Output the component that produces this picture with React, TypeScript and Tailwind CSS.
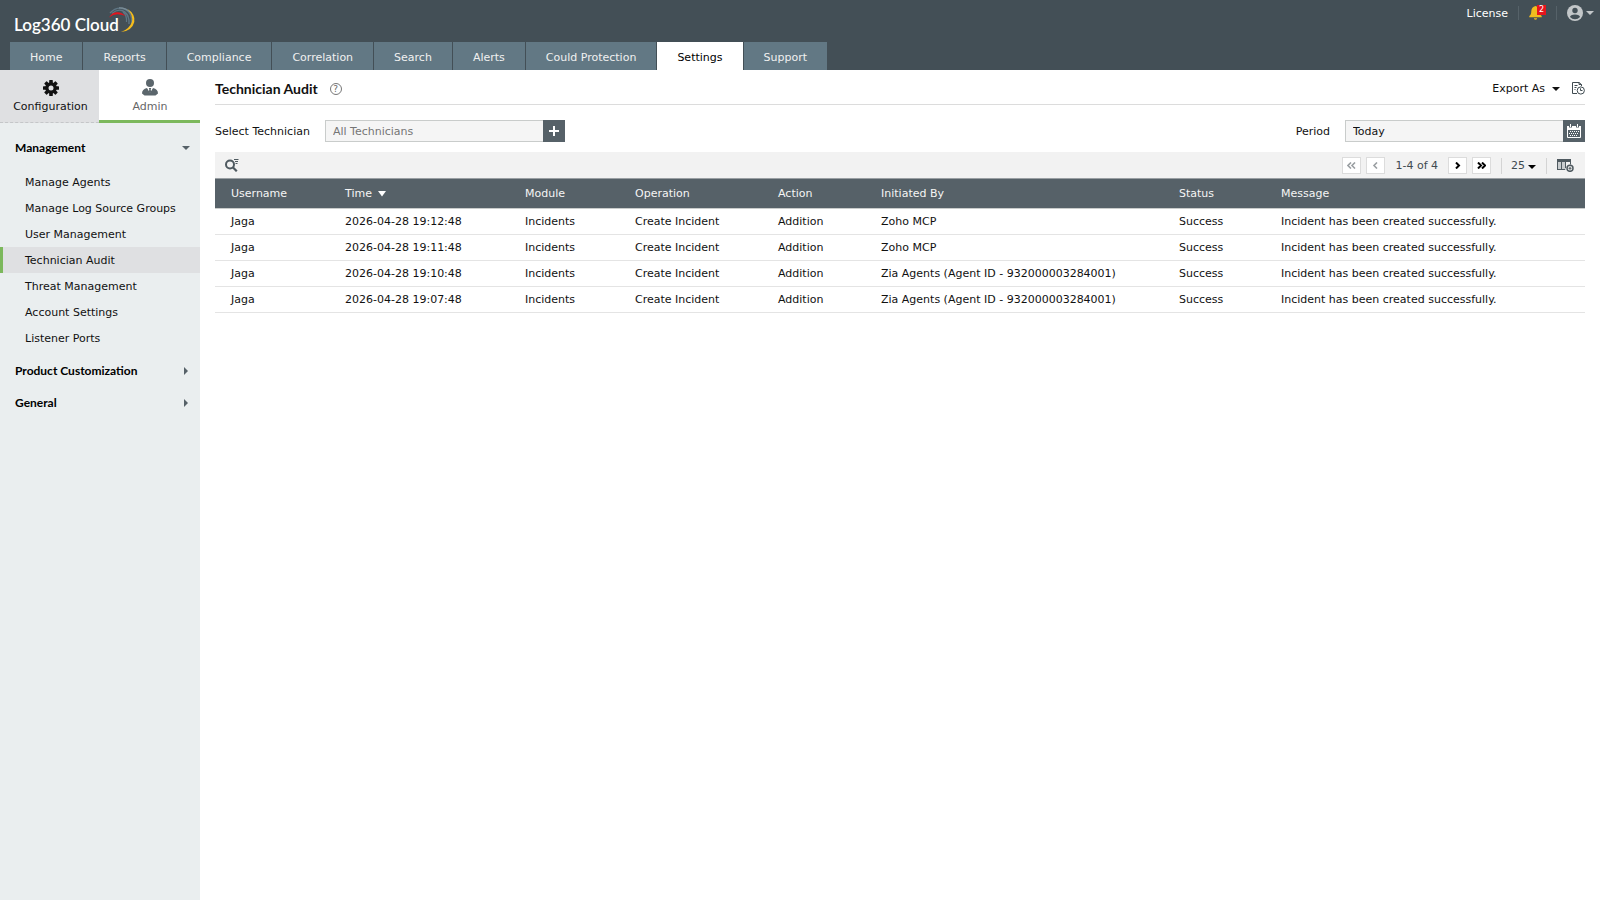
import { useState } from "react";

const TABS = [
  "Home",
  "Reports",
  "Compliance",
  "Correlation",
  "Search",
  "Alerts",
  "Could Protection",
  "Settings",
  "Support",
];

const MANAGEMENT = [
  "Manage Agents",
  "Manage Log Source Groups",
  "User Management",
  "Technician Audit",
  "Threat Management",
  "Account Settings",
  "Listener Ports",
];

interface AuditRow {
  username: string;
  time: string;
  module: string;
  operation: string;
  action: string;
  initiatedBy: string;
  status: string;
  message: string;
}

const base = {
  username: "Jaga",
  module: "Incidents",
  operation: "Create Incident",
  action: "Addition",
  status: "Success",
  message: "Incident has been created successfully.",
};

const ROWS: AuditRow[] = [
  { ...base, time: "2026-04-28 19:12:48", initiatedBy: "Zoho MCP" },
  { ...base, time: "2026-04-28 19:11:48", initiatedBy: "Zoho MCP" },
  { ...base, time: "2026-04-28 19:10:48", initiatedBy: "Zia Agents (Agent ID - 932000003284001)" },
  { ...base, time: "2026-04-28 19:07:48", initiatedBy: "Zia Agents (Agent ID - 932000003284001)" },
];

const COLUMNS: { key: keyof AuditRow; label: string; width: string }[] = [
  { key: "username", label: "Username", width: "w-[114px]" },
  { key: "time", label: "Time", width: "w-[180px]" },
  { key: "module", label: "Module", width: "w-[110px]" },
  { key: "operation", label: "Operation", width: "w-[143px]" },
  { key: "action", label: "Action", width: "w-[103px]" },
  { key: "initiatedBy", label: "Initiated By", width: "w-[298px]" },
  { key: "status", label: "Status", width: "w-[102px]" },
  { key: "message", label: "Message", width: "" },
];

function CaretDown({ className }: { className?: string }) {
  return (
    <svg viewBox="0 0 8 4" className={`h-1 w-2 ${className ?? ""}`} fill="currentColor" aria-hidden="true">
      <path d="M0 0h8L4 4z" />
    </svg>
  );
}

function CaretRight({ className }: { className?: string }) {
  return (
    <svg viewBox="0 0 4 8" className={`h-2 w-1 ${className ?? ""}`} fill="currentColor" aria-hidden="true">
      <path d="M0 0v8l4-4z" />
    </svg>
  );
}

function LogoArcs() {
  return (
    <svg viewBox="0 0 28 26" width="28" height="26" fill="none" aria-hidden="true">
      <path d="M2 6Q7 .3 14 1.200Q22 3 23.500 11V17" stroke="#5f7684" strokeWidth="1.400" />
      <path d="M4 6.500Q9 2 14 3.500Q20 6 21 13V17" stroke="#5f7684" strokeWidth="1.400" />
      <path d="M11 .8Q18 .6 23 6" stroke="#7b8d97" strokeWidth="1.200" />
      <path d="M15 5Q19 8 18.500 15" stroke="#5f7684" strokeWidth="1.200" />
      <path d="M1 10.500Q4 5.300 9.500 5.300Q14 5.500 17.500 9Q13.500 7.200 9.500 7.200Q5 7.200 1 10.500z" fill="#e5141d" />
      <path d="M19.500 2Q27.500 7 26.300 15Q24 24 13 25Q21.500 22 23.900 15Q25.300 8 19.500 2z" fill="#f5bc1c" />
    </svg>
  );
}

function GearIcon() {
  return (
    <svg viewBox="0 0 16 16" width="16" height="16" aria-hidden="true">
      <g fill="#111">
        <rect x="6.200" y="0" width="3.600" height="16" rx=".6" />
        <rect x="6.200" y="0" width="3.600" height="16" rx=".6" transform="rotate(45 8 8)" />
        <rect x="6.200" y="0" width="3.600" height="16" rx=".6" transform="rotate(90 8 8)" />
        <rect x="6.200" y="0" width="3.600" height="16" rx=".6" transform="rotate(135 8 8)" />
        <circle cx="8" cy="8" r="5.800" />
      </g>
      <circle cx="8" cy="8" r="2.500" fill="#dfe0e2" />
    </svg>
  );
}

function AdminIcon() {
  return (
    <svg viewBox="0 0 16 17" width="16" height="17" fill="#5b666c" aria-hidden="true">
      <circle cx="8" cy="4" r="4" />
      <path d="M0 14.500Q0 10 5 9l3 5 3-5q5 1 5 5.500l-2.500 2h-11z" />
      <path d="M6.800 9h2.400l-.5 1.500L9.200 13 8 14.500 6.800 13l.5-2.500z" />
    </svg>
  );
}

function BellIcon() {
  return (
    <svg viewBox="0 0 13 14" width="13" height="14" fill="#f0bd1e" aria-hidden="true">
      <path d="M6.500 0Q2.500 1 2.300 5 2.300 9 .3 10v1.300h12.400V10Q10.700 9 10.700 5 10.500 1 6.500 0z" />
      <path d="M5 12.300h3v.7q-1.500 1.500-3 0z" />
    </svg>
  );
}

function UserIcon() {
  return (
    <svg viewBox="0 0 16 16" width="16" height="16" aria-hidden="true">
      <circle cx="8" cy="8" r="8" fill="#c3c7c9" />
      <circle cx="8" cy="5.500" r="2.700" fill="#434f56" />
      <path d="M3 12Q3.300 9.400 8 9.400T13 12Q11 14.300 8 14.300T3 12z" fill="#434f56" />
    </svg>
  );
}

function ReportClockIcon() {
  return (
    <svg viewBox="0 0 13 13" width="13" height="13" fill="none" stroke="#3f4a50" aria-hidden="true">
      <path d="M5 11.500H.5V.5H7L9.500 2.500V4M7 .5v2h2.500" />
      <path d="M2.500 3.500h3M2.500 5.500h2M2.500 7.500h1" />
      <circle cx="8.800" cy="8.500" r="3.600" />
      <path d="M8.500 6.300v2.200h2" />
    </svg>
  );
}

function SearchIcon() {
  return (
    <svg viewBox="0 0 14 13" width="14" height="13" fill="none" stroke="#4f5a60" aria-hidden="true">
      <circle cx="5" cy="5.500" r="4" strokeWidth="2" />
      <path d="M7.800 8.300l4 4" strokeWidth="2.200" />
      <path d="M9 .5h4.500M10 2.500h3M10.500 4.500h2" strokeWidth="1" />
    </svg>
  );
}

function CalendarIcon() {
  return (
    <svg viewBox="0 0 14 14" width="14" height="14" aria-hidden="true">
      <path d="M.5 2.500h13v11H.5z" fill="none" stroke="#fff" />
      <path d="M0 2h14v4H0z" fill="#fff" />
      <path d="M2 0h3v3.500H2zM9 0h3v3.500H9z" fill="#566168" />
      <path d="M3 0h1v3H3zM10 0h1v3h-1z" fill="#fff" />
      <path d="M3 7.500h9M2 9.500h9M3 11.500h7" stroke="#fff" strokeDasharray="1 1" />
    </svg>
  );
}

function ColumnsIcon() {
  return (
    <svg viewBox="0 0 17 13" width="17" height="13" fill="none" stroke="#4f5a60" aria-hidden="true">
      <path d="M1 2h3v9H1zM5 2h4v9H5z" fill="#c9cdcf" stroke="none" />
      <path d="M0 1.500h14" strokeWidth="3" />
      <path d="M.5 2v9M4.500 2v9M8.500 2v7M13.500 2v3.500M0 10.500h8" />
      <circle cx="13" cy="9.300" r="3" strokeWidth="1.500" />
      <path d="M11.500 9.300h3M13 7.800v3" />
    </svg>
  );
}

function PagerButton({ label, double, back, disabled }: { label: string; double?: boolean; back?: boolean; disabled?: boolean }) {
  return (
    <button
      aria-label={label}
      disabled={disabled}
      className="flex h-[17px] w-[19px] items-center justify-center border border-[#dcdcdc] bg-white text-black disabled:text-[#9a9fa2]"
    >
      <svg
        viewBox="0 0 9 7"
        width="9"
        height="7"
        fill="none"
        stroke="currentColor"
        strokeWidth={disabled ? "1.600" : "2"}
        className={back ? "rotate-180" : ""}
        aria-hidden="true"
      >
        {double ? <path d="M1 .5l3 3-3 3M5 .5l3 3-3 3" /> : <path d="M3 .5l3 3-3 3" />}
      </svg>
    </button>
  );
}

function Header({ tab, onTab }: { tab: string; onTab: (t: string) => void }) {
  return (
    <header className="flex h-[70px] flex-col justify-between bg-[#434f56]">
      <div className="flex items-start justify-between pl-[14px] pr-[6px]">
        <a href="#home" className="relative pt-[13px] font-[Lato,sans-serif] text-[17px] leading-6 font-semibold text-white">
          Log360 Cloud
          <span className="absolute top-[7px] left-[94px]">
            <LogoArcs />
          </span>
        </a>
        <div className="flex h-[26px] items-center text-white">
          <a href="#license" className="pt-0.5">
            License
          </a>
          <span className="ml-[10px] h-[14px] w-px bg-[#566269]" />
          <button aria-label="Notifications" className="relative ml-[10px] h-[14px] w-[17px]">
            <BellIcon />
            <span className="absolute -top-px left-2 flex h-[10px] w-[9px] items-center justify-center bg-[#e5141d] text-[8px] leading-none">
              2
            </span>
          </button>
          <span className="ml-[10px] h-[14px] w-px bg-[#566269]" />
          <button aria-label="Account" className="ml-[10px] flex items-center gap-[3px] text-[#c3c7c9]">
            <UserIcon />
            <CaretDown />
          </button>
        </div>
      </div>
      <nav className="flex gap-px pl-[10px]">
        {TABS.map((t) => (
          <button
            key={t}
            onClick={() => onTab(t)}
            className={`h-7 px-5 pt-1 ${t === tab ? "bg-white text-black" : "bg-[#627884] text-[#f0f0f0]"}`}
          >
            {t}
          </button>
        ))}
      </nav>
    </header>
  );
}

function Sidebar() {
  const [active, setActive] = useState("Technician Audit");

  return (
    <aside className="w-[200px] shrink-0 bg-[#eaeeef]">
      <div className="flex h-[53px]">
        <button className="flex w-[99px] flex-col items-center gap-[3px] border-b border-dashed border-[#c4c6c8] bg-[#dfe0e2] pt-[10px] pl-0.5">
          <GearIcon />
          <span className="leading-4">Configuration</span>
        </button>
        <button className="flex flex-1 flex-col items-center gap-[3px] border-b-3 border-[#7cb85c] bg-white pt-[9px] pl-px text-[#666]">
          <AdminIcon />
          <span className="leading-4">Admin</span>
        </button>
      </div>
      <nav className="pt-[9px]">
        <SidebarGroup label="Management" open />
        <ul className="pt-[5px] pb-1">
          {MANAGEMENT.map((m) => (
            <li key={m}>
              <a
                href="#settings"
                onClick={() => setActive(m)}
                className={`flex h-[26px] items-center border-l-3 pt-0.5 pl-[22px] ${
                  m === active ? "border-[#7cb85c] bg-[#dfe0e2]" : "border-transparent"
                }`}
              >
                {m}
              </a>
            </li>
          ))}
        </ul>
        <SidebarGroup label="Product Customization" />
        <SidebarGroup label="General" />
      </nav>
    </aside>
  );
}

function SidebarGroup({ label, open }: { label: string; open?: boolean }) {
  return (
    <button
      aria-expanded={!!open}
      className="flex h-8 w-full items-center justify-between pr-[10px] pl-[15px] font-[Lato,sans-serif] text-xs font-bold text-black"
    >
      {label}
      {open ? <CaretDown className="text-[#566168]" /> : <CaretRight className="mr-[2px] text-[#566168]" />}
    </button>
  );
}

export default function App() {
  const [tab, setTab] = useState("Settings");
  const [technician, setTechnician] = useState("");

  return (
    <div className="flex min-h-screen flex-col bg-white font-['DejaVu_Sans',Verdana,sans-serif] text-[11px] text-[#111]">
      <Header tab={tab} onTab={setTab} />
      <div className="flex flex-1">
        <Sidebar />
        <main className="min-w-0 flex-1 px-[15px]">
          {/* Title bar */}
          <div className="flex h-[35px] items-center justify-between border-b border-[#dcdcdc]">
            <div className="flex items-center gap-3 pt-1">
              <h1 className="font-[Lato,sans-serif] text-sm font-bold">Technician Audit</h1>
              <button
                aria-label="Help"
                className="flex size-3 items-center justify-center rounded-full border border-[#777] text-[9px] leading-none text-[#666]"
              >
                ?
              </button>
            </div>
            <div className="flex items-center gap-3 pt-0.5">
              <button className="flex items-center gap-[7px] pt-0.5">
                Export As
                <CaretDown />
              </button>
              <button aria-label="Scheduled reports">
                <ReportClockIcon />
              </button>
            </div>
          </div>

          {/* Filters */}
          <div className="flex justify-between py-[15px] pb-[10px]">
            <div className="flex items-center gap-[15px]">
              <label htmlFor="technician" className="pt-[3px]">
                Select Technician
              </label>
              <div className="flex h-[22px]">
                <input
                  id="technician"
                  value={technician}
                  onChange={(e) => setTechnician(e.target.value)}
                  placeholder="All Technicians"
                  className="w-[218px] border border-r-0 border-[#c9cccb] bg-[#f5f5f5] px-[7px] pt-0.5 placeholder-[#757575] outline-none"
                />
                <button aria-label="Add technician" className="flex w-[22px] items-center justify-center bg-[#566168]">
                  <svg viewBox="0 0 10 10" width="10" height="10" stroke="#fff" strokeWidth="2" aria-hidden="true">
                    <path d="M0 5h10M5 0v10" />
                  </svg>
                </button>
              </div>
            </div>
            <div className="flex items-center gap-[15px]">
              <label htmlFor="period" className="pt-[3px]">
                Period
              </label>
              <div className="flex h-[22px]">
                <input
                  id="period"
                  readOnly
                  value="Today"
                  className="w-[218px] border border-r-0 border-[#c9cccb] bg-[#f5f5f5] px-[7px] pt-[3px] outline-none"
                />
                <button aria-label="Pick period" className="flex w-[22px] items-center justify-center bg-[#566168]">
                  <CalendarIcon />
                </button>
              </div>
            </div>
          </div>

          {/* Table toolbar */}
          <div className="flex h-[26px] items-center justify-between bg-[#f2f2f2] pt-px pr-[11px] pl-[10px]">
            <button aria-label="Search">
              <SearchIcon />
            </button>
            <div className="flex items-center text-[#3f4a50]">
              <div className="flex items-center gap-[5px]">
                <PagerButton label="First page" double back disabled />
                <PagerButton label="Previous page" back disabled />
                <span className="px-[5px] pt-0.5">1-4 of 4</span>
                <PagerButton label="Next page" />
                <PagerButton label="Last page" double />
              </div>
              <span className="ml-[10px] h-4 w-px bg-[#d4d4d4]" />
              <button className="ml-[9px] flex items-center gap-[3px] pt-0.5">
                25
                <CaretDown className="text-black" />
              </button>
              <span className="mx-[10px] h-4 w-px bg-[#d4d4d4]" />
              <button aria-label="Choose columns">
                <ColumnsIcon />
              </button>
            </div>
          </div>

          <table className="w-full table-fixed border-collapse text-left">
            <thead>
              <tr className="h-[30px] border-y border-t-[#9a9fa3] border-b-[#c9cccb] bg-[#566168] text-[#f5f5f5]">
                {COLUMNS.map((c) => (
                  <th key={c.key} className={`pt-px pl-4 font-normal whitespace-nowrap ${c.width}`}>
                    {c.label}
                    {c.key === "time" && (
                      <button aria-label="Sort by time" className="ml-[6px]">
                        <svg viewBox="0 0 8 6" width="8" height="6" fill="#fff" aria-hidden="true">
                          <path d="M0 0h8L4 5.500z" />
                        </svg>
                      </button>
                    )}
                  </th>
                ))}
              </tr>
            </thead>
            <tbody>
              {ROWS.map((r) => (
                <tr key={r.time} className="h-[26px] border-b border-[#e4e4e4] whitespace-nowrap">
                  {COLUMNS.map((c) => (
                    <td key={c.key} className="pt-0.5 pl-4">
                      {r[c.key]}
                    </td>
                  ))}
                </tr>
              ))}
            </tbody>
          </table>
        </main>
      </div>
    </div>
  );
}
